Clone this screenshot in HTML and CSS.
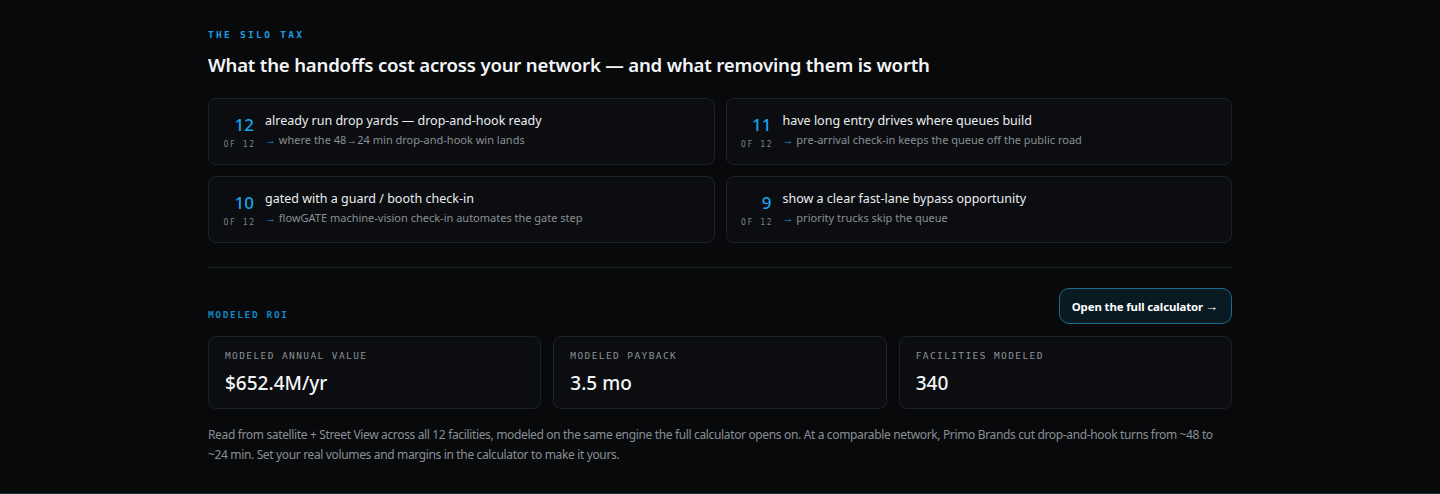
FILE: index.html
```html
<!DOCTYPE html>
<html lang="en">
<head>
<meta charset="utf-8">
<title>The Silo Tax</title>
<link rel="stylesheet" href="styles.css">
</head>
<body>
<main class="page">
  <section class="wrap">
    <div class="eyebrow">THE SILO TAX</div>
    <h2 class="title">What the handoffs cost across your network — and what removing them is worth</h2>

    <div class="finds">
      <div class="find">
        <div class="count"><span class="num">12</span><span class="of">OF 12</span></div>
        <div class="find-text">
          <div class="find-title">already run drop yards — drop-and-hook ready</div>
          <div class="find-sub"><span class="arr">→</span> where the 48→24 min drop-and-hook win lands</div>
        </div>
      </div>
      <div class="find">
        <div class="count"><span class="num">11</span><span class="of">OF 12</span></div>
        <div class="find-text">
          <div class="find-title">have long entry drives where queues build</div>
          <div class="find-sub"><span class="arr">→</span> pre-arrival check-in keeps the queue off the public road</div>
        </div>
      </div>
      <div class="find">
        <div class="count"><span class="num">10</span><span class="of">OF 12</span></div>
        <div class="find-text">
          <div class="find-title">gated with a guard / booth check-in</div>
          <div class="find-sub"><span class="arr">→</span> flowGATE machine-vision check-in automates the gate step</div>
        </div>
      </div>
      <div class="find">
        <div class="count"><span class="num">9</span><span class="of">OF 12</span></div>
        <div class="find-text">
          <div class="find-title">show a clear fast-lane bypass opportunity</div>
          <div class="find-sub"><span class="arr">→</span> priority trucks skip the queue</div>
        </div>
      </div>
    </div>

    <hr class="divider">

    <div class="roi-head">
      <div class="eyebrow eyebrow-dim">MODELED ROI</div>
      <a class="cta" href="#">Open the full calculator <span class="cta-arr">→</span></a>
    </div>

    <div class="stats">
      <div class="stat">
        <div class="stat-label">MODELED ANNUAL VALUE</div>
        <div class="stat-value">$652.4M/yr</div>
      </div>
      <div class="stat">
        <div class="stat-label">MODELED PAYBACK</div>
        <div class="stat-value">3.5 mo</div>
      </div>
      <div class="stat">
        <div class="stat-label">FACILITIES MODELED</div>
        <div class="stat-value">340</div>
      </div>
    </div>

    <p class="note">Read from satellite + Street View across all 12 facilities, modeled on the same engine the full calculator opens on. At a comparable network, Primo Brands cut drop-and-hook turns from ~48 to ~24 min. Set your real volumes and margins in the calculator to make it yours.</p>
  </section>
</main>
</body>
</html>
```

FILE: styles.css
```css
* { box-sizing: border-box; }
html, body { margin: 0; padding: 0; }
body {
  background: #07090b;
  color: #e6e8eb;
  font-family: "Noto Sans", "Open Sans", sans-serif;
}
.page {
  height: 494px;
  border-bottom: 1px solid #0f3442;
}
.wrap {
  width: 1024px;
  margin: 0 auto;
  padding-top: 29px;
}
.eyebrow {
  font-family: "DejaVu Sans Mono", monospace;
  font-size: 9.5px;
  font-weight: 700;
  letter-spacing: 2.3px;
  color: #1a9fe3;
  line-height: 12px;
}
.eyebrow-dim {
  color: #1485c0;
  letter-spacing: 1.6px;
}
.title {
  margin: 10px 0 0;
  font-size: 18.6px;
  font-weight: 600;
  line-height: 28px;
  color: #f4f5f7;
  letter-spacing: -0.2px;
}
.finds {
  margin-top: 19px;
  display: grid;
  grid-template-columns: 1fr 1fr;
  gap: 11px 11px;
}
.find {
  display: flex;
  align-items: flex-start;
  gap: 11px;
  height: 67px;
  padding: 13px 14px 0 14px;
  background: #0b0d10;
  border: 1px solid #1e2226;
  border-radius: 8px;
}
.count {
  width: 31px;
  display: flex;
  flex-direction: column;
  align-items: flex-end;
  padding-top: 3px;
}
.num {
  font-size: 17px;
  line-height: 20px;
  color: #1aa3ea;
  font-weight: 500;
}
.of {
  font-family: "DejaVu Sans Mono", monospace;
  font-size: 8px;
  letter-spacing: 1.6px;
  margin-right: -1.6px;
  color: #7d8288;
  margin-top: 5px;
  line-height: 10px;
}
.find-title {
  font-size: 12.5px;
  line-height: 18px;
  color: #eceef0;
}
.find-sub {
  font-size: 11px;
  line-height: 16px;
  margin-top: 2px;
  color: #8a8f95;
}
.arr {
  color: #1a9fe3;
  font-weight: 700;
}
.divider {
  margin: 24px 0 0;
  border: 0;
  border-top: 1px solid #1d2622;
  height: 0;
}
.roi-head {
  margin-top: 20px;
  display: flex;
  justify-content: space-between;
  align-items: flex-end;
}
.roi-head .eyebrow { padding-bottom: 3px; }
.cta {
  display: inline-flex;
  align-items: center;
  gap: 2px;
  height: 36px;
  padding: 0 13px 0 12px;
  border: 1px solid #1b6b8e;
  border-radius: 10px;
  background: #0a1a23;
  color: #ffffff;
  font-weight: 700;
  font-size: 11.4px;
  letter-spacing: -0.1px;
  text-decoration: none;
}
.cta-arr { font-size: 13px; }
.stats {
  margin-top: 12px;
  display: grid;
  grid-template-columns: repeat(3, 1fr);
  gap: 12px;
}
.stat {
  height: 73px;
  padding: 13px 16px 0;
  background: #0b0d10;
  border: 1px solid #1e2226;
  border-radius: 8px;
}
.stat-label {
  font-family: "DejaVu Sans Mono", monospace;
  font-size: 9.5px;
  letter-spacing: 1.4px;
  color: #8d9196;
  line-height: 12px;
}
.stat-value {
  margin-top: 8px;
  font-size: 19px;
  font-weight: 500;
  line-height: 26px;
  color: #f4f5f7;
}
.note {
  margin: 16px 0 0;
  font-size: 12px;
  letter-spacing: -0.35px;
  line-height: 20px;
  color: #8a8f95;
}
```
